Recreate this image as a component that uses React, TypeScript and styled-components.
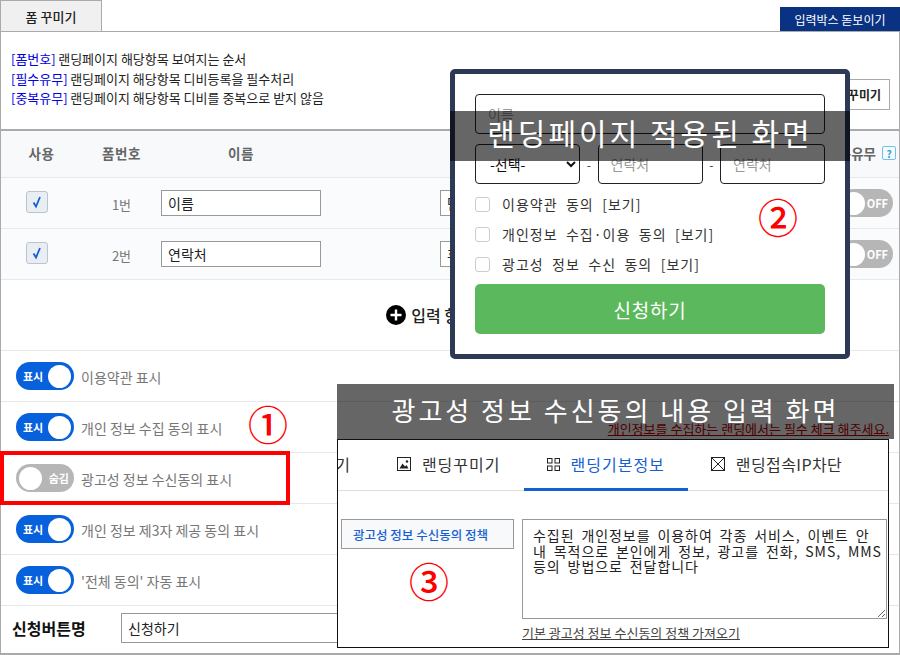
import React from "react"
import styled, { createGlobalStyle } from "styled-components"

const FONT = `"Noto Sans CJK KR", "Noto Sans", sans-serif`

const GlobalStyle = createGlobalStyle`
  html, body {
    margin: 0;
    padding: 0;
    background: #fff;
    font-family: ${FONT};
  }
  * { box-sizing: border-box; }
`

const Page = styled.div`
  position: relative;
  width: 900px;
  height: 655px;
  overflow: hidden;
  background: #fff;
`

const TopBar = styled.div`
  display: flex;
  justify-content: space-between;
  align-items: flex-end;
  height: 32px;
  border-bottom: 1px solid #aaa;
`

const FormTab = styled.div`
  display: flex;
  align-items: center;
  justify-content: center;
  width: 102px;
  height: 31px;
  background: #f0f0f0;
  border: 1px solid #aaa;
  border-bottom: 0;
  font-size: 13px;
  font-weight: 500;
  color: #222;
`

const HighlightTab = styled.div`
  display: flex;
  align-items: center;
  justify-content: center;
  width: 120px;
  height: 24px;
  background: #0a3282;
  color: #fff;
  font-size: 12px;
`

const Frame = styled.div`
  height: 623px;
  border: 1px solid #aaa;
  border-top: 0;
  border-bottom: 2px solid #aaa;
`

const NoticeArea = styled.div`
  display: flex;
  justify-content: space-between;
  align-items: flex-start;
  height: 99px;
  padding: 17px 9px 0 10px;
  border-bottom: 2px solid #aaa;
`

const NoticeList = styled.div`
  font-size: 13px;
  line-height: 19.7px;
  color: #222;
`

const NoticeKey = styled.span`
  color: #0000e0;
  margin-right: 2.5px;
`

const DecorateButton = styled.div`
  display: flex;
  align-items: center;
  height: 31px;
  margin-top: 30px;
  padding: 0 8px;
  border: 1px solid #aaa;
  font-size: 12px;
  font-weight: 700;
  color: #222;
`

const FieldGrid = styled.div`
  display: grid;
  grid-template-columns: 81px 79px 160px 119px 1fr auto;
  align-items: center;
`

const HeaderRow = styled(FieldGrid)`
  height: 47px;
  background: #f8f9fb;
  border-bottom: 1px solid #e6e8ec;
  padding-bottom: 2px;
`

const HeaderCell = styled.div`
  text-align: center;
  font-size: 13.5px;
  letter-spacing: 0.5px;
  font-weight: 700;
  color: #666;
`

const HelpCell = styled.div`
  display: flex;
  align-items: center;
  grid-column: 6;
  gap: 6px;
  padding-right: 3px;
  font-size: 13.5px;
  font-weight: 700;
  color: #666;
`

const HelpBadge = styled.span`
  display: flex;
  align-items: center;
  justify-content: center;
  width: 14px;
  height: 14px;
  border: 1px solid #6cc4ec;
  border-radius: 2px;
  color: #2aa4dc;
  font-size: 10px;
  font-weight: 700;
`

const FieldRow = styled(FieldGrid)`
  height: 51px;
  background: #fafbfc;
  border-bottom: 1px solid #e6e8ec;
`

const CheckCell = styled.div`
  display: flex;
  padding: 0 0 2px 25px;
`

const CheckBox = styled.div`
  display: flex;
  align-items: center;
  justify-content: center;
  width: 22px;
  height: 22px;
  background: #e9eef4;
  border: 1px solid #bcc3cb;
  border-radius: 3px;
`

const NumberCell = styled.div`
  padding-top: 2px;
  text-align: center;
  font-size: 13px;
  color: #777;
`

const TextBox = styled.input`
  width: 160px;
  height: 26px;
  padding: 0 6px;
  background: #fff;
  border: 1px solid #999;
  font-family: ${FONT};
  font-size: 14px;
  color: #222;
  outline: none;
`

const TypeBox = styled(TextBox)`
  grid-column: 5;
  width: 120px;
`

const SwitchCell = styled.div`
  grid-column: 6;
  display: flex;
  justify-content: flex-end;
  padding-right: 6px;
`

const Track = styled.div<{ $on: boolean; $width: number }>`
  display: flex;
  flex-direction: ${(props) => (props.$on ? "row" : "row-reverse")};
  align-items: center;
  justify-content: space-between;
  width: ${(props) => props.$width}px;
  height: 28px;
  padding: 0 ${(props) => (props.$on ? 3 : 5)}px 0 ${(props) => (props.$on ? 7 : 3)}px;
  border-radius: 14px;
  background: ${(props) => (props.$on ? "#0760dc" : "#b6b6b6")};
  color: #fff;
  font-size: 11px;
  font-weight: 700;
`

const Knob = styled.span`
  width: 23px;
  height: 23px;
  border-radius: 50%;
  background: #fff;
`

const AddRow = styled.div`
  display: flex;
  align-items: center;
  justify-content: center;
  gap: 5px;
  height: 71px;
  padding-right: 7px;
  border-bottom: 1px solid #e6e8ec;
  font-size: 16px;
  font-weight: 500;
  color: #222;
`

const OptionRow = styled.div`
  display: flex;
  align-items: center;
  gap: 7px;
  height: 51px;
  padding: 0 10px 0 15px;
  border-bottom: 1px solid #e6e8ec;
`

const OptionLabel = styled.span`
  padding-top: 2px;
  font-size: 14px;
  color: #777;
`

const RequiredNote = styled.span`
  margin-left: auto;
  padding-top: 2px;
  font-size: 13px;
  color: #c00000;
  text-decoration: underline;
  white-space: nowrap;
`

const ButtonNameRow = styled.div`
  display: flex;
  align-items: center;
  height: 47px;
  padding: 0 0 4px 11px;
`

const ButtonNameLabel = styled.div`
  width: 109px;
  font-size: 16px;
  font-weight: 700;
  color: #111;
`

const ButtonNameInput = styled(TextBox)`
  width: 300px;
  height: 30px;
`

const PreviewPanel = styled.div`
  position: absolute;
  left: 450px;
  top: 69px;
  width: 400px;
  height: 290px;
  padding: 20px 20px 0;
  background: #fff;
  border: 5px solid #2c3a56;
  border-radius: 5px;
`

const PreviewInput = styled.input`
  display: block;
  width: 100%;
  height: 40px;
  padding: 0 12px;
  border: 1px solid #222;
  border-radius: 4px;
  background: #fff;
  font-family: ${FONT};
  font-size: 14px;
  outline: none;
  &::placeholder { color: #999; }
`

const PhoneInput = styled(PreviewInput)`
  flex: none;
  width: 105px;
`

const PhoneRow = styled.div`
  display: flex;
  align-items: center;
  gap: 5px;
  margin: 10px 0 5px;
`

const PhoneSelect = styled.select`
  flex: none;
  width: 105px;
  height: 40px;
  padding: 0 10px;
  border: 1px solid #222;
  border-radius: 4px;
  background: #fff;
  font-family: ${FONT};
  font-size: 14px;
  color: #111;
`

const Dash = styled.span`
  width: 7.5px;
  text-align: center;
  font-size: 12px;
  color: #333;
`

const AgreeRow = styled.div`
  display: flex;
  align-items: center;
  gap: 12px;
  height: 30px;
  font-size: 14px;
  letter-spacing: 1px;
  word-spacing: 4.3px;
  color: #333;
`

const AgreeBox = styled.span`
  width: 15px;
  height: 15px;
  border: 1px solid #ccc;
  border-radius: 3px;
`

const ApplyButton = styled.div`
  display: flex;
  align-items: center;
  justify-content: center;
  height: 50px;
  margin-top: 5px;
  border-radius: 5px;
  background: #5cb85c;
  color: #fff;
  font-size: 19px;
  letter-spacing: 0.8px;
`

const CaptionStrip = styled.div<{ $left: number; $top: number; $width: number; $height: number; $size: number; $spacing: number; $lift: number }>`
  position: absolute;
  left: ${(props) => props.$left}px;
  top: ${(props) => props.$top}px;
  width: ${(props) => props.$width}px;
  height: ${(props) => props.$height}px;
  display: flex;
  align-items: center;
  justify-content: center;
  padding-bottom: ${(props) => props.$lift}px;
  background: rgba(0, 0, 0, 0.6);
  color: #fff;
  font-size: ${(props) => props.$size}px;
  letter-spacing: ${(props) => props.$spacing}px;
  white-space: nowrap;
`

const PolicyPanel = styled.div`
  position: absolute;
  left: 337px;
  top: 439px;
  width: 552px;
  height: 209px;
  background: #fff;
  border: 1px solid #111;
  overflow: hidden;
`

const TabStrip = styled.div`
  display: flex;
  height: 51px;
  margin-left: -73px;
  width: 700px;
  border-bottom: 1px solid #ddd;
`

const PolicyTab = styled.div<{ $active?: boolean; $tight?: boolean }>`
  display: flex;
  align-items: center;
  gap: 11px;
  height: 51px;
  padding: 0 23px;
  flex: none;
  border-bottom: 3px solid ${(props) => (props.$active ? "#1560d0" : "transparent")};
  color: ${(props) => (props.$active ? "#1560d0" : "#333")};
  font-size: 16px;
  letter-spacing: ${(props) => (props.$tight ? 0.4 : 1)}px;
`

const PolicyBody = styled.div`
  display: flex;
  gap: 8px;
  padding: 28px 0 0 3px;
`

const PolicyLabel = styled.div`
  display: flex;
  align-items: center;
  flex: none;
  width: 173px;
  height: 30px;
  padding-left: 11px;
  background: #f8f9fb;
  border: 1px solid #999;
  color: #1560d0;
  font-size: 12.5px;
  font-weight: 500;
  white-space: nowrap;
`

const PolicyColumn = styled.div`
  flex: 1;
  padding-right: 1px;
`

const PolicyText = styled.textarea`
  display: block;
  width: 365px;
  height: 100px;
  padding: 8px 0 8px 10px;
  border: 1px solid #999;
  background: #fff;
  font-family: ${FONT};
  font-size: 14px;
  letter-spacing: 0.95px;
  word-spacing: 2.8px;
  line-height: 15.5px;
  white-space: pre;
  overflow: hidden;
  color: #222;
  outline: none;
`

const PolicyLink = styled.div`
  margin-top: 4px;
  font-size: 13px;
  color: #444;
  text-decoration: underline;
`

const RedBox = styled.div`
  position: absolute;
  left: 0;
  top: 451px;
  width: 290px;
  height: 54px;
  border: 4px solid #f00;
`

const StepMark = styled.div<{ $left: number; $top: number }>`
  position: absolute;
  left: ${(props) => props.$left}px;
  top: ${(props) => props.$top}px;
  width: 44px;
  height: 44px;
  display: flex;
  align-items: center;
  justify-content: center;
  color: #f00;
  font-size: 40px;
  font-weight: 500;
  line-height: 44px;
`

const CheckIcon = () => (
  <svg width="14" height="14" viewBox="0 0 14 14">
    <path d="M3.5 7.5 L6 11.5 L10 2" fill="none" stroke="#1560d0" strokeWidth="1.8" />
  </svg>
)

const PlusIcon = () => (
  <svg width="20" height="20" viewBox="0 0 20 20">
    <circle cx="10" cy="10" r="10" fill="#000" />
    <path d="M10 4.5 V15.5 M4.5 10 H15.5" stroke="#fff" strokeWidth="2.4" />
  </svg>
)

const PictureIcon = () => (
  <svg width="14" height="14" viewBox="0 0 14 14">
    <rect x="0.5" y="0.5" width="13" height="13" fill="none" stroke="#222" />
    <path d="M2.5 11.5 L5.5 6.5 L8 9.5 L9.5 8 L11.5 11.5 Z" fill="#222" />
    <circle cx="10" cy="4.5" r="1.2" fill="#222" />
  </svg>
)

const GridIcon = () => (
  <svg width="13" height="13" viewBox="0 0 13 13" fill="none" stroke="#222">
    <rect x="0.5" y="0.5" width="4.5" height="4.5" />
    <rect x="8" y="0.5" width="4.5" height="4.5" />
    <rect x="0.5" y="8" width="4.5" height="4.5" />
    <rect x="8" y="8" width="4.5" height="4.5" />
  </svg>
)

const BlockIcon = () => (
  <svg width="14" height="14" viewBox="0 0 14 14" fill="none" stroke="#222">
    <rect x="0.5" y="0.5" width="13" height="13" />
    <path d="M0.5 0.5 L13.5 13.5 M13.5 0.5 L0.5 13.5" />
  </svg>
)

const Toggle = ({ on, label, width = 58 }: { on: boolean; label: string; width?: number }) => (
  <Track $on={on} $width={width}>
    <span>{label}</span>
    <Knob />
  </Track>
)

const FIELDS = [
  { id: "1번", name: "이름", type: "단문형" },
  { id: "2번", name: "연락처", type: "휴대폰" },
]

const OPTIONS = [
  { label: "이용약관 표시", on: true },
  { label: "개인 정보 수집 동의 표시", on: true, note: "개인정보를 수집하는 랜딩에서는 필수 체크 해주세요." },
  { label: "광고성 정보 수신동의 표시", on: false },
  { label: "개인 정보 제3자 제공 동의 표시", on: true },
  { label: "'전체 동의' 자동 표시", on: true },
]

const AGREEMENTS = ["이용약관 동의 [보기]", "개인정보 수집·이용 동의 [보기]", "광고성 정보 수신 동의 [보기]"]

const POLICY_TEXT = "수집된 개인정보를 이용하여 각종 서비스, 이벤트 안\n내 목적으로 본인에게 정보, 광고를 전화, SMS, MMS\n등의 방법으로 전달합니다"

export default function App() {
  return (
    <Page>
      <GlobalStyle />
      <TopBar>
        <FormTab>폼 꾸미기</FormTab>
        <HighlightTab>입력박스 돋보이기</HighlightTab>
      </TopBar>
      <Frame>
        <NoticeArea>
          <NoticeList>
            <div><NoticeKey>[폼번호]</NoticeKey>랜딩페이지 해당항목 보여지는 순서</div>
            <div><NoticeKey>[필수유무]</NoticeKey>랜딩페이지 해당항목 디비등록을 필수처리</div>
            <div><NoticeKey>[중복유무]</NoticeKey>랜딩페이지 해당항목 디비를 중복으로 받지 않음</div>
          </NoticeList>
          <DecorateButton>폼 꾸미기</DecorateButton>
        </NoticeArea>
        <HeaderRow>
          <HeaderCell>사용</HeaderCell>
          <HeaderCell>폼번호</HeaderCell>
          <HeaderCell>이름</HeaderCell>
          <HelpCell>중복유무<HelpBadge>?</HelpBadge></HelpCell>
        </HeaderRow>
        {FIELDS.map((field) => (
          <FieldRow key={field.id}>
            <CheckCell><CheckBox><CheckIcon /></CheckBox></CheckCell>
            <NumberCell>{field.id}</NumberCell>
            <TextBox readOnly value={field.name} />
            <TypeBox readOnly value={field.type} />
            <SwitchCell><Toggle on={false} label="OFF" width={54} /></SwitchCell>
          </FieldRow>
        ))}
        <AddRow><PlusIcon />입력 항목 추가</AddRow>
        {OPTIONS.map((option) => (
          <OptionRow key={option.label}>
            <Toggle on={option.on} label={option.on ? "표시" : "숨김"} />
            <OptionLabel>{option.label}</OptionLabel>
            {option.note && <RequiredNote>{option.note}</RequiredNote>}
          </OptionRow>
        ))}
        <ButtonNameRow>
          <ButtonNameLabel>신청버튼명</ButtonNameLabel>
          <ButtonNameInput readOnly value="신청하기" />
        </ButtonNameRow>
      </Frame>

      <PreviewPanel>
        <PreviewInput placeholder="이름" readOnly />
        <PhoneRow>
          <PhoneSelect defaultValue="none">
            <option value="none">-선택-</option>
          </PhoneSelect>
          <Dash>-</Dash>
          <PhoneInput placeholder="연락처" readOnly />
          <Dash>-</Dash>
          <PhoneInput placeholder="연락처" readOnly />
        </PhoneRow>
        {AGREEMENTS.map((text) => (
          <AgreeRow key={text}><AgreeBox />{text}</AgreeRow>
        ))}
        <ApplyButton>신청하기</ApplyButton>
      </PreviewPanel>
      <CaptionStrip $left={450} $top={111} $width={400} $height={50} $size={30} $spacing={3} $lift={9}>
        랜딩페이지 적용된 화면
      </CaptionStrip>

      <CaptionStrip $left={337} $top={384} $width={557} $height={55} $size={26} $spacing={3} $lift={4}>
        광고성 정보 수신동의 내용 입력 화면
      </CaptionStrip>
      <PolicyPanel>
        <TabStrip>
          <PolicyTab>폼꾸미기</PolicyTab>
          <PolicyTab><PictureIcon />랜딩꾸미기</PolicyTab>
          <PolicyTab $active><GridIcon />랜딩기본정보</PolicyTab>
          <PolicyTab $tight><BlockIcon />랜딩접속IP차단</PolicyTab>
          <PolicyTab><BlockIcon />랜딩설정</PolicyTab>
        </TabStrip>
        <PolicyBody>
          <PolicyLabel>광고성 정보 수신동의 정책</PolicyLabel>
          <PolicyColumn>
            <PolicyText readOnly value={POLICY_TEXT} />
            <PolicyLink>기본 광고성 정보 수신동의 정책 가져오기</PolicyLink>
          </PolicyColumn>
        </PolicyBody>
      </PolicyPanel>

      <RedBox />
      <StepMark $left={246} $top={401}>①</StepMark>
      <StepMark $left={756} $top={194}>②</StepMark>
      <StepMark $left={407} $top={558}>③</StepMark>
    </Page>
  )
}
